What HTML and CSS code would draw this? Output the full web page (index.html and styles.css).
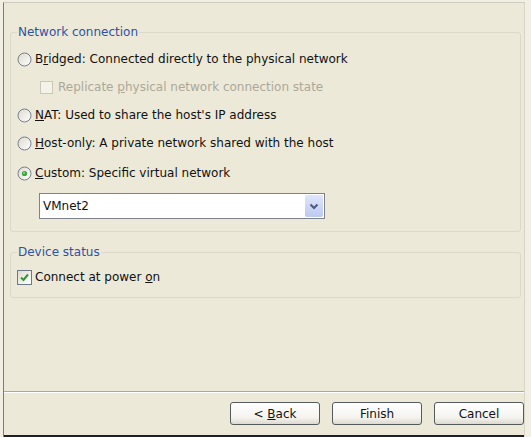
FILE: index.html
```html
<!DOCTYPE html>
<html>
<head>
<meta charset="utf-8">
<link rel="stylesheet" href="styles.css">
</head>
<body>
<div class="window">
  <div class="content">
    <fieldset class="group net">
      <legend>Network connection</legend>
      <div class="row">
        <svg class="radio" width="15" height="15" viewBox="0 0 15 15"><defs><linearGradient id="rg" x1="0" y1="0" x2="1" y2="1"><stop offset="0" stop-color="#dcd9cc"/><stop offset="1" stop-color="#ffffff"/></linearGradient></defs><circle cx="7.5" cy="7.5" r="6.5" fill="url(#rg)" stroke="#77818d"/></svg>
        <span>B<u>r</u>idged: Connected directly to the physical network</span>
      </div>
      <div class="row sub disabled">
        <span class="cbox off"></span>
        <span>Replicate <u>p</u>hysical network connection state</span>
      </div>
      <div class="row">
        <svg class="radio" width="15" height="15" viewBox="0 0 15 15"><circle cx="7.5" cy="7.5" r="6.5" fill="url(#rg)" stroke="#77818d"/></svg>
        <span><u>N</u>AT: Used to share the host's IP address</span>
      </div>
      <div class="row">
        <svg class="radio" width="15" height="15" viewBox="0 0 15 15"><circle cx="7.5" cy="7.5" r="6.5" fill="url(#rg)" stroke="#77818d"/></svg>
        <span><u>H</u>ost-only: A private network shared with the host</span>
      </div>
      <div class="row custom">
        <svg class="radio" width="15" height="15" viewBox="0 0 15 15"><circle cx="7.5" cy="7.5" r="6.5" fill="url(#rg)" stroke="#77818d"/><circle cx="7.5" cy="7.5" r="2.6" fill="#3aa63a"/><circle cx="7" cy="7" r="1" fill="#8fd88f"/></svg>
        <span><u>C</u>ustom: Specific virtual network</span>
      </div>
      <div class="combo">
        <span class="combo-text">VMnet2</span>
        <span class="combo-btn"><svg width="10" height="7" viewBox="0 0 10 7"><path d="M1.5 1.5 L5 5 L8.5 1.5" fill="none" stroke="#4a5a80" stroke-width="2"/></svg></span>
      </div>
    </fieldset>
    <fieldset class="group dev">
      <legend>Device status</legend>
      <div class="row">
        <span class="cbox on"><svg width="11" height="11" viewBox="0 0 11 11"><path d="M2 5.5 L4.5 8 L9 2.5" fill="none" stroke="#2f9a2f" stroke-width="2"/></svg></span>
        <span>Connect at power <u>o</u>n</span>
      </div>
    </fieldset>
  </div>
  <div class="footer">
    <button class="btn">&lt; <u>B</u>ack</button>
    <button class="btn">Finish</button>
    <button class="btn">Cancel</button>
  </div>
</div>
</body>
</html>
```
FILE: styles.css
```css
html, body {
  margin: 0;
  padding: 0;
  background: #f1efe4;
}
body {
  width: 531px;
  height: 437px;
  overflow: hidden;
  font-family: "DejaVu Sans", sans-serif;
  font-size: 12px;
  color: #111;
}
.window {
  box-sizing: border-box;
  margin-left: 3px;
  margin-top: 2px;
  width: 522px;
  height: 435px;
  background: #ece9d8;
  border-left: 1px solid #7d7b72;
  border-top: 1px solid #cfcdc0;
  border-right: 1px solid #d8d5c7;
  display: flex;
  flex-direction: column;
}
.content {
  flex: 1;
  display: flex;
  flex-direction: column;
}
.group {
  margin: 0 3px 0 6px;
  border: 1px solid #dcd9c9;
  border-radius: 3px;
  padding: 0 6px;
}
.group legend {
  color: #2d52a3;
  padding: 0 1px;
  line-height: 14px;
}
.net {
  margin-top: 22px;
  padding-top: 6px;
  padding-bottom: 12px;
}
.dev {
  margin-top: 13px;
  padding-top: 4px;
  padding-bottom: 6px;
}
.row {
  height: 28px;
  display: flex;
  align-items: center;
  gap: 3px;
  white-space: nowrap;
}
.row.custom {
  margin-top: 2px;
}
.row.sub {
  padding-left: 23px;
  gap: 5px;
}
.disabled {
  color: #aca899;
}
.radio {
  flex: none;
  display: block;
}
.cbox {
  flex: none;
  box-sizing: border-box;
  display: flex;
  align-items: center;
  justify-content: center;
}
.cbox.off {
  width: 13px;
  height: 13px;
  border: 1px solid #cbc8b9;
  background: #f4f3ea;
}
.cbox.on {
  width: 15px;
  height: 15px;
  border: 1px solid #6b7888;
  background: linear-gradient(135deg, #dedbd0, #ffffff);
}
.combo {
  box-sizing: border-box;
  margin-top: 6px;
  margin-left: 22px;
  width: 286px;
  height: 26px;
  border: 1px solid #7f848c;
  background: #fff;
  display: flex;
  align-items: center;
  justify-content: space-between;
  padding: 0 1px 0 3px;
}
.combo-btn {
  width: 18px;
  height: 22px;
  border-radius: 2px;
  background: linear-gradient(180deg, #dfe6fb, #bcc9f1);
  display: flex;
  align-items: center;
  justify-content: center;
}
.footer {
  height: 46px;
  box-sizing: border-box;
  border-top: 1px solid #aca899;
  box-shadow: inset 0 1px 0 #ffffff;
  display: flex;
  justify-content: flex-end;
  align-items: flex-start;
  gap: 12px;
  padding: 10px 0 0 0;
  border-bottom: 2px solid #1d1f2e;
}
.btn {
  width: 90px;
  height: 23px;
  font-family: inherit;
  font-size: 12px;
  color: #111;
  border: 1px solid #555a5c;
  border-radius: 3px;
  background: linear-gradient(180deg, #ffffff 0%, #f4f3ee 70%, #dcd9cf 100%);
  padding: 0;
}
```
